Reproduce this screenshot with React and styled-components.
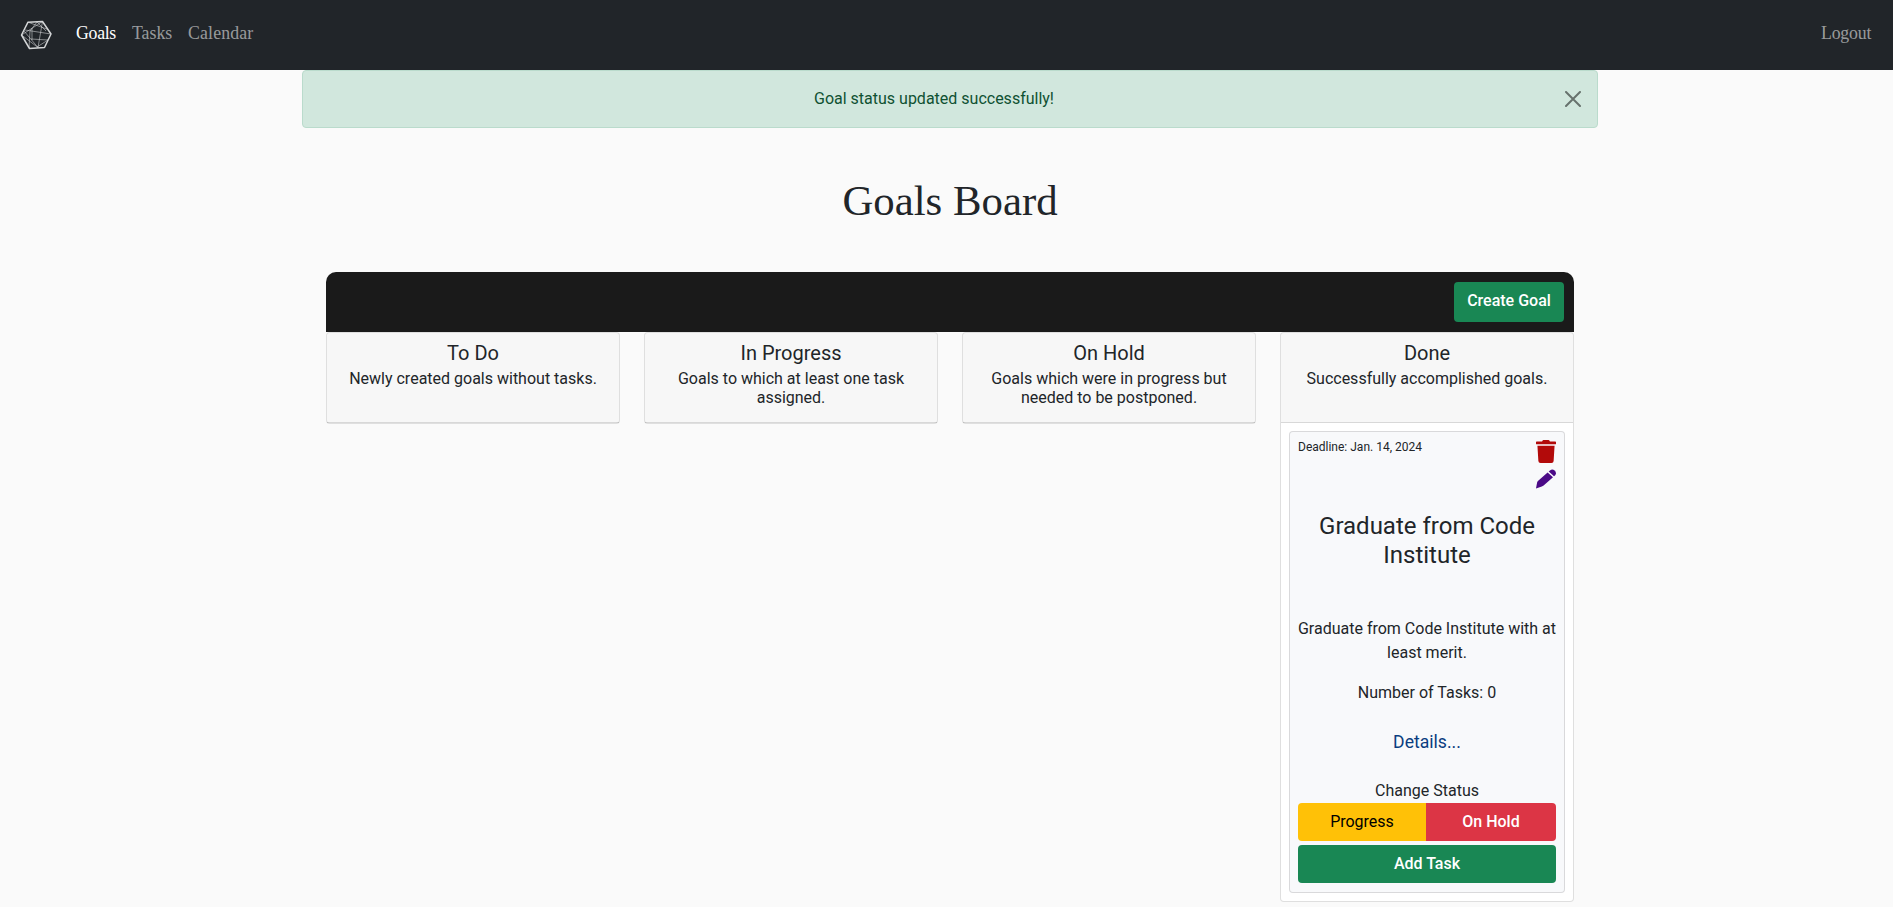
import React from 'react';
import styled, { createGlobalStyle } from 'styled-components';
import { FaTrash } from 'react-icons/fa';

const GlobalStyle = createGlobalStyle`
  *, *::before, *::after { box-sizing: border-box; }
  body {
    margin: 0;
    background: #fafafa;
    color: #212529;
    font: 400 16px/1.5 Roboto, "Liberation Sans", sans-serif;
    overflow: hidden;
  }
  h1, h2, h3, p { margin: 0; font-weight: 400; }
  button { font-family: inherit; cursor: pointer; }
  a { text-decoration: none; }
`;

const Navbar = styled.nav`
  height: 70px;
  padding: 0 21px 0 20px;
  display: flex;
  align-items: center;
  background: #212529;
  font-family: "Liberation Serif", serif;
`;

const Logo = styled.svg`
  width: 32px;
  height: 30px;
  margin-right: 24px;
  fill: none;
  stroke: #d4d6d7;
  stroke-linejoin: round;
`;

const NavLink = styled.a`
  width: ${(p) => p.$width}px;
  margin-right: ${(p) => p.$gap || 0}px;
  margin-left: ${(p) => (p.$end ? 'auto' : 0)};
  margin-bottom: 4px;
  font-size: 17.8px;
  line-height: 24px;
  letter-spacing: ${(p) => p.$tracking || 0}px;
  white-space: nowrap;
  color: ${(p) => (p.$active ? '#fff' : 'rgba(255, 255, 255, 0.55)')};
`;

const Alert = styled.div`
  width: 1296px;
  height: 58px;
  margin: 0 0 0 302px;
  padding: 0 16px;
  display: flex;
  align-items: center;
  border: 1px solid #badbcc;
  border-radius: 4px;
  background: #d1e7dd;
  color: #0f5132;
`;

const AlertText = styled.span`
  flex: 1;
  padding-right: 16px;
  text-align: center;
`;

const CloseButton = styled.button`
  width: 16px;
  height: 16px;
  padding: 0;
  border: 0;
  background: none;
  opacity: 0.5;
  svg { display: block; }
`;

const PageTitle = styled.h1`
  height: 48px;
  margin: 49px 0 47px 7px;
  font: 400 42.8px/48px "Liberation Serif", serif;
  text-align: center;
`;

const Board = styled.main`
  width: 1248px;
  margin-left: 326px;
`;

const BoardBar = styled.header`
  height: 60px;
  padding: 10px;
  display: flex;
  justify-content: flex-end;
  background: #1a1a1a;
  border-radius: 10px 10px 0 0;
`;

const tones = {
  success: ['#198754', '#fff'],
  warning: ['#ffc107', '#000'],
  danger: ['#dc3545', '#fff'],
};

const Button = styled.button`
  height: ${(p) => p.$height || 38}px;
  padding: 0 0 ${(p) => (p.$height ? 3 : 0)}px;
  flex: ${(p) => (p.$fill ? '1 1 0' : 'none')};
  width: ${(p) => p.$width || 'auto'};
  border: 0;
  border-radius: 4px;
  background: ${(p) => tones[p.$tone][0]};
  color: ${(p) => tones[p.$tone][1]};
  font-size: 16px;
  font-weight: ${(p) => (p.$tone === 'warning' ? 400 : 500)};
  line-height: 24px;
  white-space: nowrap;
`;

const Columns = styled.div`
  display: grid;
  grid-template-columns: repeat(4, 294px);
  gap: 24px;
  align-items: start;
`;

const Column = styled.section`
  border: 1px solid rgba(0, 0, 0, 0.125);
  border-radius: 4px;
  background: #fff;
`;

const ColumnHeader = styled.header`
  height: 90px;
  padding: 8px 16px;
  background: rgba(0, 0, 0, 0.03);
  border-bottom: 1px solid rgba(0, 0, 0, 0.125);
  border-radius: 3px 3px 0 0;
  text-align: center;
`;

const ColumnTitle = styled.h2`
  margin-bottom: 4px;
  font-size: 20px;
  line-height: 24px;
`;

const ColumnText = styled.p`
  line-height: 19.2px;
`;

const GoalCard = styled.article`
  height: 462px;
  margin: 8px;
  padding: 8px;
  display: flex;
  flex-direction: column;
  border: 1px solid rgba(0, 0, 0, 0.125);
  border-radius: 4px;
  background: #f8f9fb;
  text-align: center;
`;

const CardTop = styled.div`
  height: 72px;
  display: flex;
  justify-content: space-between;
  font-size: 12px;
  line-height: 14px;
`;

const IconStack = styled.div`
  width: 20px;
  display: flex;
  flex-direction: column;
  gap: 6px;
`;

const TrashIcon = styled(FaTrash)`
  display: block;
  width: 20px;
  height: 23px;
  color: #b20a0a;
`;

const PencilIcon = styled.svg`
  display: block;
  width: 20px;
  height: 20px;
  fill: #4b0a87;
`;

const GoalTitle = styled.h3`
  height: 105px;
  font-size: 24px;
  line-height: 28.8px;
`;

const GoalText = styled.p`
  height: ${(p) => p.$height}px;
  margin: 0 -3px;
`;

const DetailsLink = styled.a`
  height: 50px;
  font-size: 17.6px;
  line-height: 26px;
  color: #0a3d80;
`;

const ButtonGroup = styled.div`
  display: flex;
  margin-bottom: 4px;
  button:first-child { flex: 0 0 128px; border-radius: 4px 0 0 4px; }
  button:last-child { border-radius: 0 4px 4px 0; }
`;

const columns = [
  { title: 'To Do', text: 'Newly created goals without tasks.' },
  { title: 'In Progress', text: 'Goals to which at least one task assigned.' },
  { title: 'On Hold', text: 'Goals which were in progress but needed to be postponed.' },
  { title: 'Done', text: 'Successfully accomplished goals.', goal: true },
];

function Goal() {
  return (
    <GoalCard>
      <CardTop>
        <span>Deadline: Jan. 14, 2024</span>
        <IconStack>
          <TrashIcon />
          <PencilIcon viewBox="0 0 20 20">
            <path d="M0 19.4 1.1 13.4Q1.4 12.4 2.2 11.7L11.6 3.4 17 8.3 7.6 16.4Q6.8 17.1 5.8 17.4Z" />
            <path d="M12.7 2.5 14 1.4Q16.3-.4 18.6 1.4 21 3.8 19.2 6.2L18 7.3Z" />
          </PencilIcon>
        </IconStack>
      </CardTop>
      <GoalTitle>Graduate from Code Institute</GoalTitle>
      <GoalText $height={64}>Graduate from Code Institute with at least merit.</GoalText>
      <GoalText $height={48}>Number of Tasks: 0</GoalText>
      <DetailsLink href="#">Details...</DetailsLink>
      <GoalText $height={24}>Change Status</GoalText>
      <ButtonGroup>
        <Button $tone="warning" $fill>Progress</Button>
        <Button $tone="danger" $fill>On Hold</Button>
      </ButtonGroup>
      <Button $tone="success" $width="100%">Add Task</Button>
    </GoalCard>
  );
}

export default function App() {
  return (
    <>
      <GlobalStyle />
      <Navbar>
        <Logo viewBox="0 0 32 30">
          <path strokeWidth="1.5" d="M1.5 15 8 2.2 22.5 1.5 31 14 24.5 27.5 9.5 28.5Z" />
          <path strokeWidth=".75" opacity=".75" d="M8 2.2 28 9.5M1.5 15 22.5 1.5M4 11 18 27.5M17 2 10 11 9 28M22.5 1.5 18 27.5M31 14 5 10M11 19 28 20 17 27M1.5 15 18 27.5M17 2 26 11M12 8 12 20" />
        </Logo>
        <NavLink href="#" $active $width={40} $gap={16} $tracking={-0.3}>Goals</NavLink>
        <NavLink href="#" $width={40} $gap={16}>Tasks</NavLink>
        <NavLink href="#" $width={66} $tracking={0.15}>Calendar</NavLink>
        <NavLink href="#" $width={51} $tracking={-0.2} $end>Logout</NavLink>
      </Navbar>
      <Alert role="alert">
        <AlertText>Goal status updated successfully!</AlertText>
        <CloseButton aria-label="Close">
          <svg width="16" height="16" viewBox="0 0 16 16">
            <path d="M1 1 15 15M15 1 1 15" stroke="#000" strokeWidth="2" strokeLinecap="round" />
          </svg>
        </CloseButton>
      </Alert>
      <PageTitle>Goals Board</PageTitle>
      <Board>
        <BoardBar>
          <Button $tone="success" $height={40} $width="110px">Create Goal</Button>
        </BoardBar>
        <Columns>
          {columns.map((column) => (
            <Column key={column.title}>
              <ColumnHeader>
                <ColumnTitle>{column.title}</ColumnTitle>
                <ColumnText>{column.text}</ColumnText>
              </ColumnHeader>
              {column.goal && <Goal />}
            </Column>
          ))}
        </Columns>
      </Board>
    </>
  );
}
